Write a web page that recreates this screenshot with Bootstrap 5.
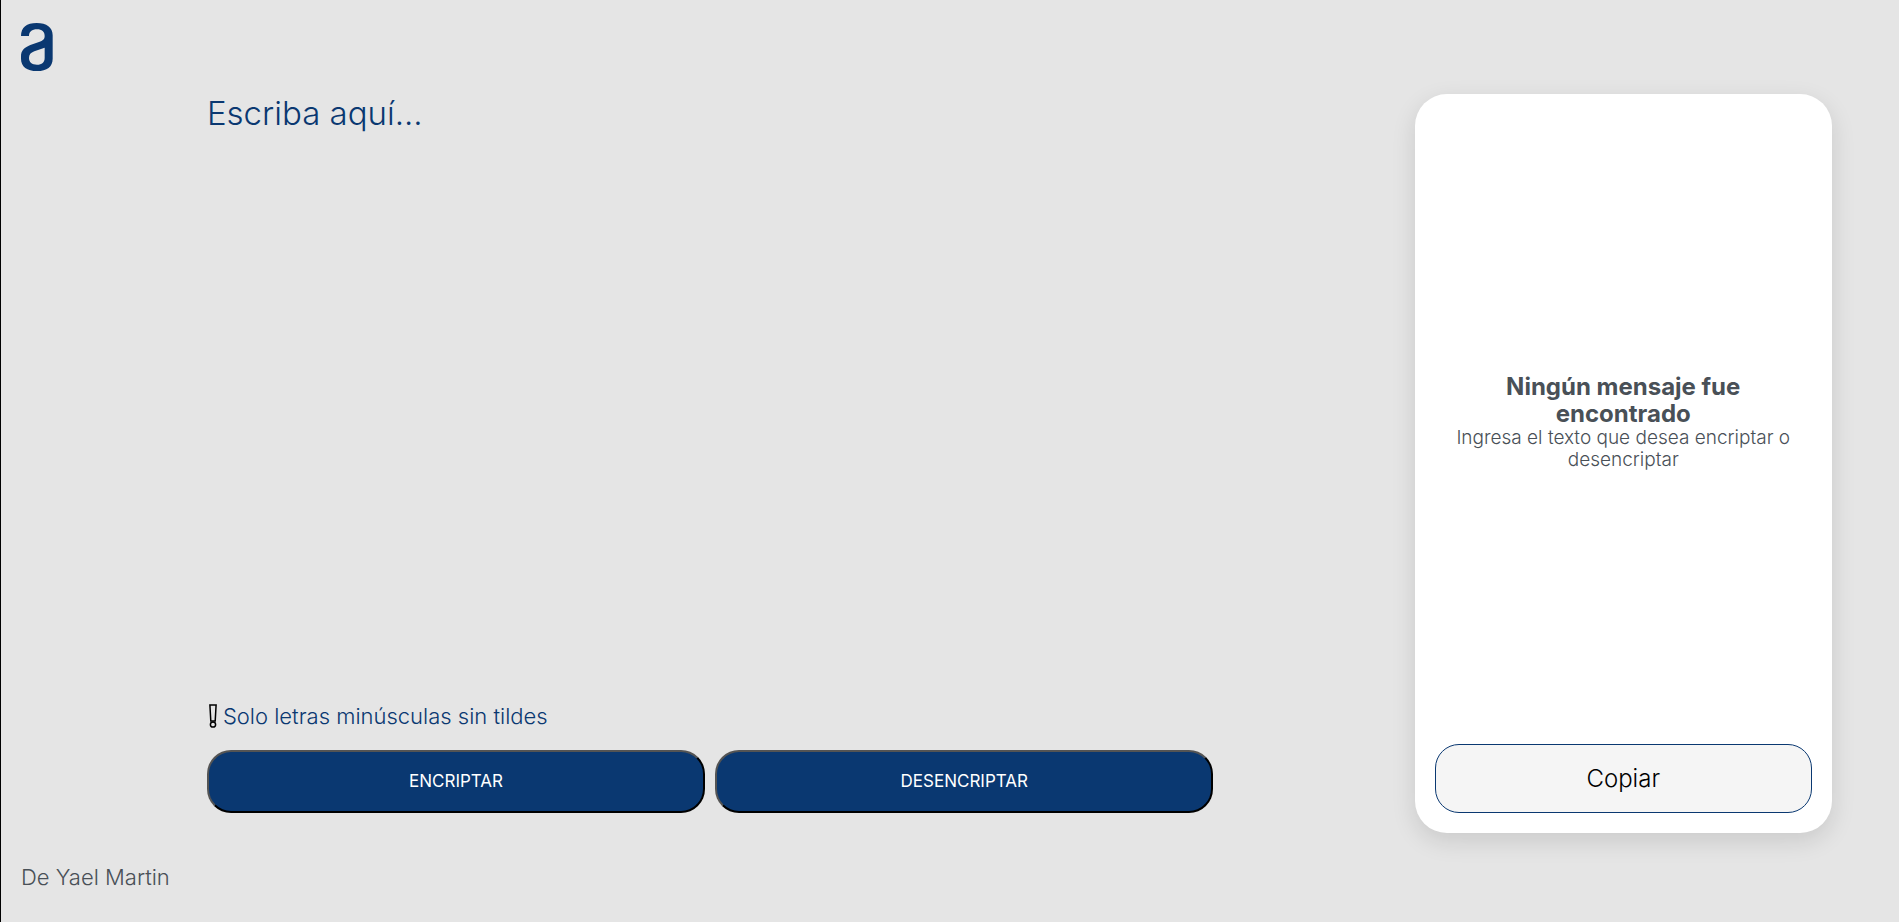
<!DOCTYPE html>
<html lang="es">
<head>
<meta charset="utf-8">
<meta name="viewport" content="width=device-width, initial-scale=1">
<title>Encriptador de texto</title>
<link href="https://cdn.jsdelivr.net/npm/bootstrap@5.3.0/dist/css/bootstrap.min.css" rel="stylesheet">
<style>
  :root { --navy: #0a3871; --slate: #495057; }
  body { background: #e5e5e5; color: var(--slate); font-family: Inter, "Liberation Sans", sans-serif; font-weight: 300; }
  .page-shell { border-left: 1px solid #000; }
  .page-header { height: 94px; padding: 23px 20px 0; }
  .page-footer { height: 89px; padding: 28px 20px 0; font-size: 22px; line-height: 32px; }
  .workspace { grid-template-columns: 1007fr 417fr; column-gap: 12.4%; padding: 0 3.55% 0 10.85%; }
  .editor { padding-bottom: 20px; }
  .message-input { resize: none; color: var(--navy); font-size: 33px; line-height: 38px; padding: 0; outline: 0; font-weight: 300; }
  .message-input::placeholder { color: var(--navy); opacity: 1; }
  .hint { color: var(--navy); font-size: 22px; line-height: 32px; padding: 0 2px; margin-bottom: 18px; gap: 6px; }
  .actions { gap: 10px; }
  .action-btn { height: 63px; border: 2px outset #000; border-radius: 24px; background: var(--navy); color: #fff; font-size: 17px; font-weight: 400; }
  .result { border-radius: 32px; padding: 20px; box-shadow: 0 8px 24px rgba(0, 0, 0, .12); }
  .result-message { padding-bottom: 14px; }
  .result-title { font-size: 24px; line-height: 27px; font-weight: 700; }
  .result-text { font-size: 19px; line-height: 22px; }
  .copy-btn { height: 69px; border: 1px solid var(--navy); border-radius: 24px; background: #f5f5f5; color: #000; font-size: 24px; font-weight: 300; }
  @media (max-width: 900px) {
    .workspace { grid-template-columns: 1fr; row-gap: 24px; padding: 0 20px; }
    .message-input, .result { min-height: 320px; }
  }
</style>
</head>
<body>
<div class="page-shell min-vh-100 d-flex flex-column">
  <header class="page-header">
    <a href="#" class="d-inline-flex" aria-label="Inicio">
      <svg width="32" height="48" viewBox="0 0 96 144" fill="#0a3871" fill-rule="evenodd" aria-hidden="true">
        <path d="M0 39C0 13 17 0 47 0S95 13 95 37V107C95 131 78 144 48 144S0 131 0 107V100C0 82 11 73 28 66L56 56C67 52 71 48 71 39C71 26 63 19 48 19S24 26 24 39ZM71 74L40 85C29 89 24 95 24 105C24 118 33 125 48 125S71 118 71 104Z"/>
      </svg>
    </a>
  </header>
  <main class="workspace d-grid flex-grow-1">
    <form class="editor d-flex flex-column" onsubmit="return false">
      <textarea class="message-input flex-grow-1 w-100 border-0 bg-transparent" placeholder="Escriba aquí..." aria-label="Escriba aquí"></textarea>
      <p class="hint d-flex align-items-center">
        <svg width="8" height="24" viewBox="0 0 8 24" fill="none" stroke="#000" stroke-width="1.5" aria-hidden="true">
          <path d="M.9 1H7.1L6.2 17H1.8Z"/><circle cx="4" cy="20.5" r="2.6"/>
        </svg>
        <span>Solo letras minúsculas sin tildes</span>
      </p>
      <div class="actions d-flex">
        <button type="button" class="action-btn flex-fill w-50">ENCRIPTAR</button>
        <button type="button" class="action-btn flex-fill w-50">DESENCRIPTAR</button>
      </div>
    </form>
    <section class="result bg-white d-flex flex-column text-center">
      <div class="result-message flex-grow-1 d-flex flex-column justify-content-center">
        <h1 class="result-title mb-0">Ningún mensaje fue<br>encontrado</h1>
        <p class="result-text mb-0">Ingresa el texto que desea encriptar o<br>desencriptar</p>
      </div>
      <button type="button" class="copy-btn w-100">Copiar</button>
    </section>
  </main>
  <footer class="page-footer">De Yael Martin</footer>
</div>
<script src="https://cdn.jsdelivr.net/npm/bootstrap@5.3.0/dist/js/bootstrap.bundle.min.js"></script>
</body>
</html>
